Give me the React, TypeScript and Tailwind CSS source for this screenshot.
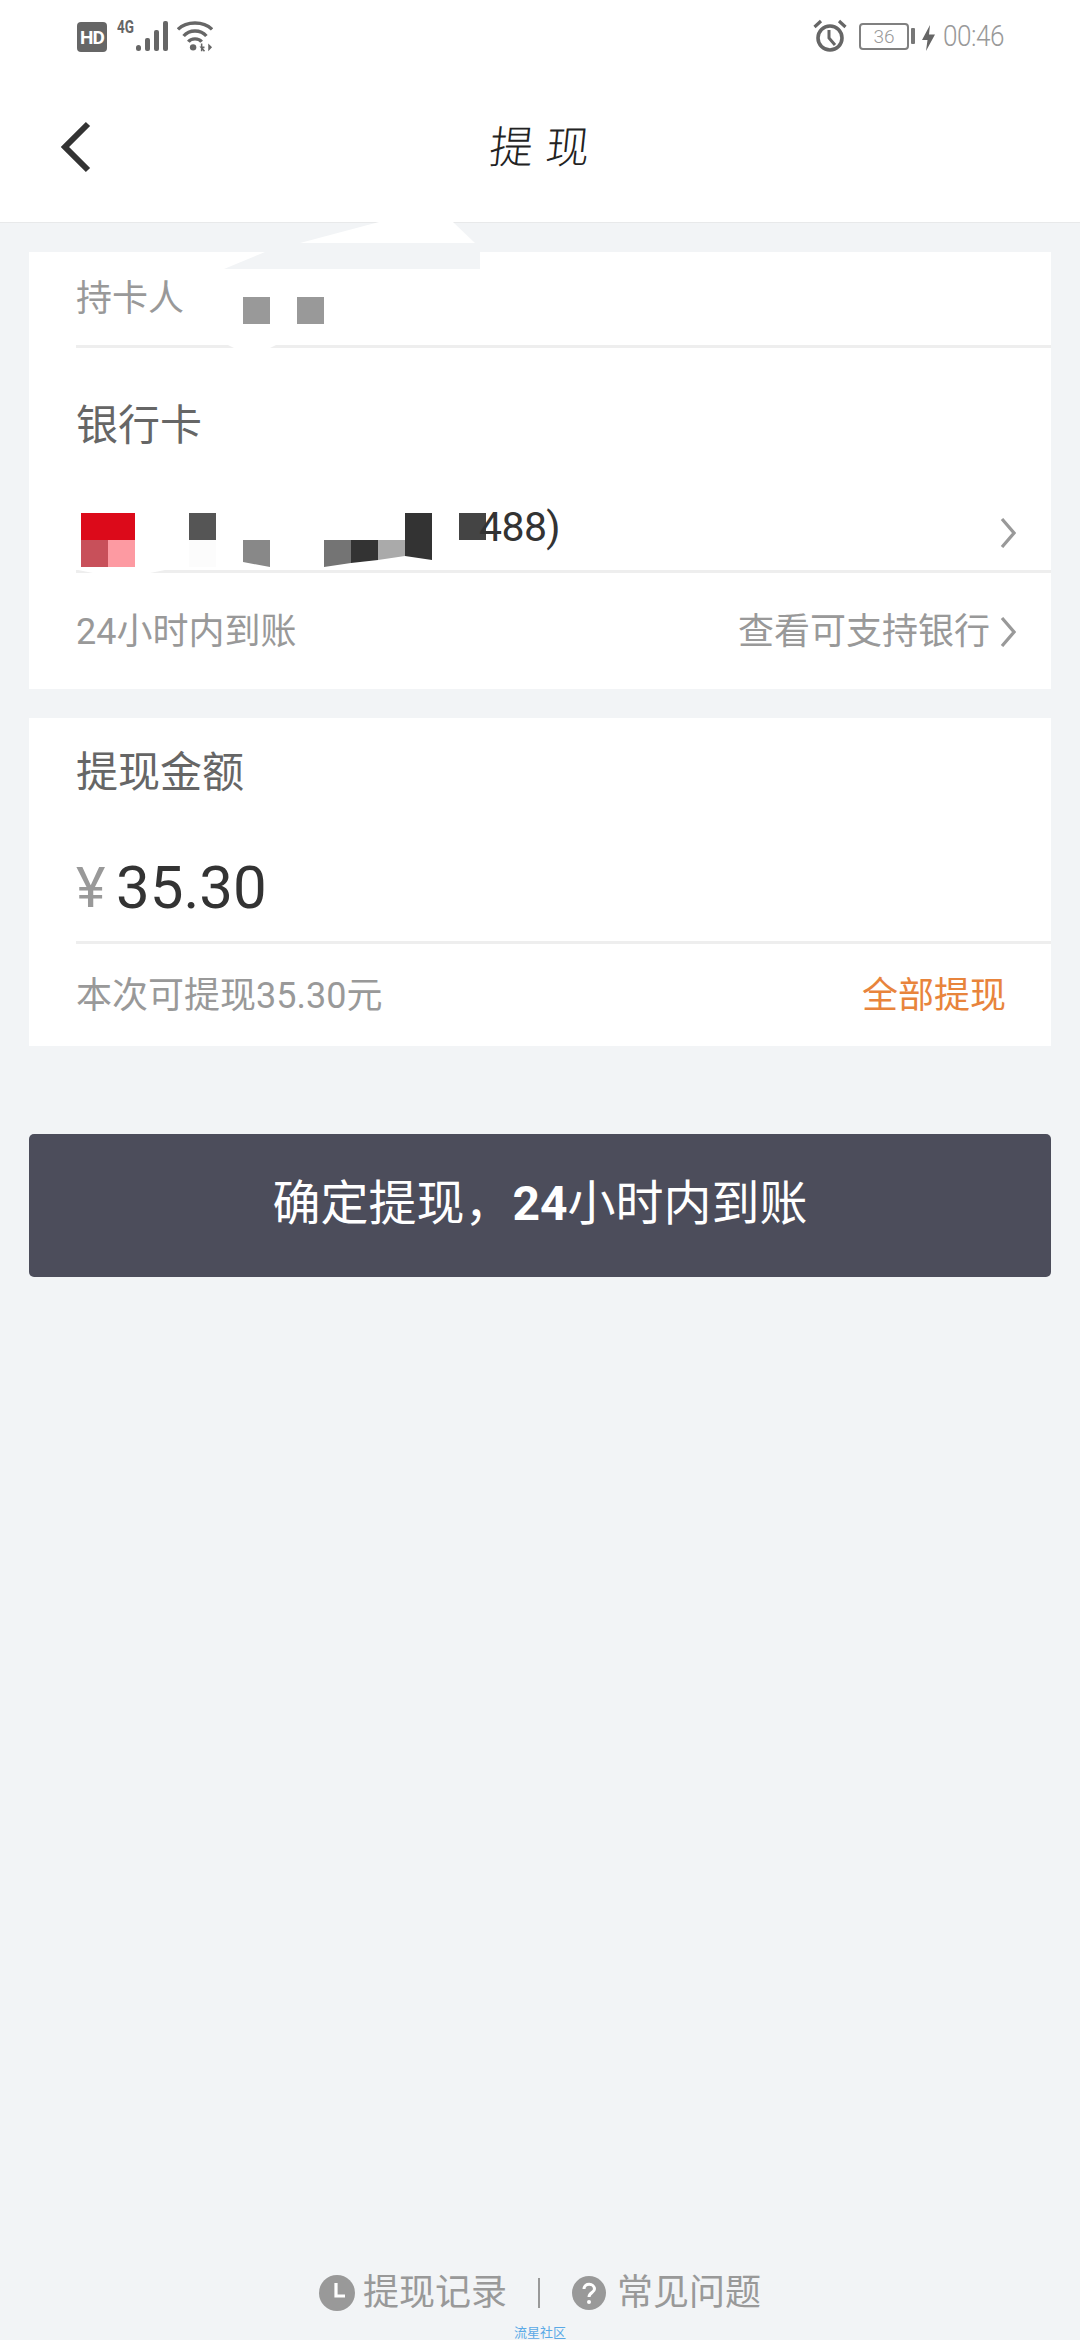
const top = ['#dc0a1a','#dc0a1a','','','#555555','','','','','#ffffff','','','#333333','','#444444'];
const bottom = ['#c8505a','#fd9aa2','','','#fcfcfc','','#888888','','','#747474','#333333','#aaaaaa','#333333','',''];

function Chevron({ className }: { className: string }) {
  return (
    <svg className={className} viewBox="0 0 16 30" fill="none" stroke="#999999" strokeWidth="3.2">
      <path d="M2 1 L14 15 L2 29" />
    </svg>
  );
}

function StatusLeft() {
  return (
    <div className="flex items-start gap-[10px]">
      <div className="w-[30px] h-[30px] rounded-[4px] bg-[#666666] flex items-center justify-center text-white font-bold text-[19px] leading-none tracking-[-1px] mt-[22px]">HD</div>
      <div className="text-[#666666] font-bold text-[18px] leading-none mt-[18px] w-[18px] scale-x-75 origin-left">4G</div>
      <svg className="w-[34px] h-[34px] mt-[19px] -ml-[10px]" viewBox="0 0 34 34" fill="#666666">
        <rect x="1" y="26" width="5" height="6" rx="2.5" />
        <rect x="10" y="19" width="5" height="13" rx="2" />
        <rect x="19" y="11" width="5" height="21" rx="2" />
        <rect x="28" y="2" width="5" height="30" rx="2" />
      </svg>
      <svg className="w-[36px] h-[34px] mt-[19px] -ml-[2px]" viewBox="0 0 38 34" fill="none" stroke="#666666" strokeWidth="3.6">
        <path d="M1 10 C10 1 28 1 37 10" />
        <path d="M7 17 C13 10 25 10 31 17" />
        <path d="M12 23 C15 19 23 19 26 23" />
        <circle cx="17" cy="29" r="3.4" fill="#666666" stroke="none" />
        <path d="M26 25 L26 33 M29 33 L25.5 29 L29 29" strokeWidth="1.6" />
        <path d="M33 25 L37 29 L33 33 Z" fill="#666666" stroke="none" />
      </svg>
    </div>
  );
}

function StatusRight() {
  return (
    <div className="flex items-start">
      <svg className="w-[34px] h-[34px] mt-[19px]" viewBox="0 0 34 34" fill="none" stroke="#666666" strokeWidth="3.6">
        <circle cx="17" cy="19" r="12" />
        <path d="M16 11 V19 L22 26" strokeWidth="3" />
        <path d="M1.5 8 L8 2 M32.5 8 L26 2" strokeWidth="3.2" />
      </svg>
      <div className="w-[50px] h-[27px] ml-[12px] mt-[23px] rounded-[4px] border-2 border-[#808080] flex items-center justify-center text-[#999999] text-[19px] font-light leading-none">36</div>
      <div className="w-[4px] h-[16px] ml-[2px] mt-[28px] bg-[#777777] rounded-[1px]" />
      <svg className="w-[13px] h-[26px] ml-[7px] mt-[25px]" viewBox="0 0 13 26" fill="#666666">
        <path d="M8 0 L0 15 H5.5 L4 26 L13 9.5 H7 Z" />
      </svg>
      <div className="ml-[8px] mt-[21px] text-[#999999] text-[29px] font-light leading-[30px] tracking-[-0.5px] w-[60px] scale-x-90 origin-left">00:46</div>
    </div>
  );
}

function Smears() {
  return (
    <svg className="absolute left-0 top-0 w-[1080px] h-[600px] pointer-events-none" viewBox="0 0 1080 600">
      <path d="M300 243 L379 222 H453 L475 243 Z" fill="#ffffff" />
      <path d="M224 269 L265 252 H480 V269 Z" fill="#f2f4f6" />
      <path d="M228 345 L236 349 H268 L276 345 Z" fill="#ffffff" />
      <path d="M78 570 L98 574 H145 L165 570 Z" fill="#ffffff" />
      <path d="M243 562 L270 567 V570 H243 Z" fill="#ffffff" />
      <path d="M324 567 L351 563 L378 560 L405 556 L432 560 V570 H324 Z" fill="#ffffff" />
    </svg>
  );
}

export default function App() {
  return (
    <div className="relative w-[1080px] h-[2340px] overflow-hidden bg-[#f2f4f6] flex flex-col font-['Roboto','Noto_Sans_CJK_SC',sans-serif]">
      <div className="bg-white h-[223px] border-b border-[#e8e9ea] shrink-0 flex flex-col">
        <div className="h-[56px] px-[77px] flex justify-between shrink-0">
          <StatusLeft />
          <StatusRight />
        </div>
        <div className="relative flex-1 flex items-center justify-center">
          <svg className="absolute left-[60px] top-[65px] w-[32px] h-[52px]" viewBox="0 0 32 52" fill="none" stroke="#333333" strokeWidth="6">
            <path d="M28 3 L5 26 L28 49" />
          </svg>
          <div className="text-[#222222] text-[44px] leading-[48px] tracking-[12px] -skew-x-6 font-light mt-[10px] pl-[12px] font-['Noto_Sans_CJK_SC',sans-serif]">提现</div>
        </div>
      </div>

      <div className="mx-[29px] mt-[29px] bg-white">
        <div className="h-[93px] pl-[47px] flex items-start">
          <span className="mt-[29px] text-[36px] leading-[36px] text-[#999999] w-[108px]">持卡人</span>
          <span className="mt-[45px] ml-[59px] w-[27px] h-[27px] bg-[#999999]" />
          <span className="mt-[45px] ml-[27px] w-[27px] h-[27px] bg-[#999999]" />
        </div>
        <div className="ml-[47px] h-[3px] bg-[#eeeeee]" />
        <div className="pl-[47px] pt-[57px] text-[42px] leading-[42px] text-[#666666]">银行卡</div>
        <div className="mt-[66px] pl-[52px] pr-[35px] flex items-start">
          <div className="grid grid-cols-[repeat(15,27px)] grid-rows-[27px_27px]">
            {top.map((c, i) => (
              <div key={`t${i}`} style={{ backgroundColor: c || 'transparent' }} />
            ))}
            {bottom.map((c, i) => (
              <div key={`b${i}`} style={{ backgroundColor: c || 'transparent' }} />
            ))}
          </div>
          <span className="-ml-[7px] -mt-[11px] text-[41px] leading-[50px] tracking-[-0.6px] text-[#333333]">488)</span>
          <Chevron className="ml-auto mt-[5px] w-[16px] h-[30px]" />
        </div>
        <div className="mt-[3px] ml-[47px] h-[3px] bg-[#eeeeee]" />
        <div className="h-[116px] pl-[47px] pr-[35px] pt-[41px] flex items-start justify-between text-[36px] leading-[36px] text-[#999999]">
          <span>24小时内到账</span>
          <span className="flex items-start">
            查看可支持银行
            <Chevron className="ml-[10px] mt-[3px] w-[16px] h-[30px]" />
          </span>
        </div>
      </div>

      <div className="mx-[29px] mt-[29px] bg-white">
        <div className="pl-[47px] pt-[34px] text-[42px] leading-[42px] text-[#666666]">提现金额</div>
        <div className="pl-[47px] mt-[58px] flex items-center h-[72px]">
          <span className="text-[#999999] text-[56px] leading-[72px] w-[40px]">¥</span>
          <span className="text-[#333333] text-[60px] leading-[72px]">35.30</span>
        </div>
        <div className="mt-[17px] ml-[47px] h-[3px] bg-[#eeeeee]" />
        <div className="h-[102px] pl-[47px] pr-[45px] pt-[34px] flex items-start justify-between text-[36px] leading-[36px]">
          <span className="text-[#999999]">本次可提现35.30元</span>
          <span className="text-[#e8843c]">全部提现</span>
        </div>
      </div>

      <div className="mx-[29px] mt-[88px] h-[143px] pb-[3px] rounded-[5px] bg-[#4c4d5b] flex items-center justify-center text-white text-[48px]">
        确定提现，<span className="font-bold">24</span>小时内到账
      </div>

      <div className="mt-auto flex flex-col items-center">
        <div className="flex items-center text-[36px] leading-[36px] text-[#999999]">
          <svg className="w-[36px] h-[36px]" viewBox="0 0 36 36">
            <circle cx="18" cy="18" r="18" fill="#999999" />
            <path d="M17 8 V21 H26" fill="none" stroke="#ffffff" strokeWidth="3.2" />
          </svg>
          <span className="ml-[8px]">提现记录</span>
          <span className="ml-[31px] w-[2px] h-[30px] bg-[#999999]" />
          <svg className="ml-[32px] w-[34px] h-[34px]" viewBox="0 0 34 34">
            <circle cx="17" cy="17" r="17" fill="#999999" />
            <path d="M12 13 C12 6.5 22.5 7 22.5 13 C22.5 16.5 17 16.5 17 21" fill="none" stroke="#ffffff" strokeWidth="3" />
            <circle cx="17" cy="26" r="2" fill="#ffffff" />
          </svg>
          <span className="ml-[11px]">常见问题</span>
        </div>
        <div className="mt-[15px] h-[14px] text-[13px] leading-[14px] text-[#5aa9e6]">流星社区</div>
      </div>

      <Smears />
    </div>
  );
}
